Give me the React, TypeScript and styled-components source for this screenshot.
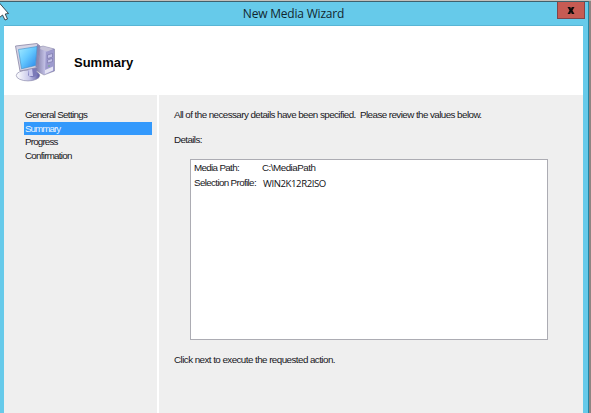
import React from "react";
import styled, { createGlobalStyle } from "styled-components";

const GlobalStyle = createGlobalStyle`
  * { box-sizing: border-box; }
  html, body { margin: 0; overflow: hidden; }
  body { background: #8f8583; font-family: "Liberation Sans", Arial, sans-serif; }
`;

const Screen = styled.div`
  position: relative;
  width: 591px;
  height: 413px;
  padding-right: 2px;
  border-top: 1px solid #c3bfba;
  overflow: hidden;
`;

const WindowFrame = styled.div`
  height: 412px;
  padding: 0 5px 0 4px;
  background: #66caea;
  border-top: 1px solid #40606c;
  border-right: 1px solid #2187a5;
  display: flex;
  flex-direction: column;
`;

const TitleBar = styled.header`
  height: 24px;
  flex: none;
  display: grid;
  grid-template-columns: 1fr auto 1fr;
  align-items: start;
  border-bottom: 1px solid #58b5d5;
`;

const Title = styled.h1`
  grid-column: 2;
  margin: 0;
  font: 400 12px/24px "Open Sans", sans-serif;
  letter-spacing: -0.2px;
  color: #12272f;
`;

const CloseButton = styled.button`
  justify-self: end;
  width: 28px;
  height: 17px;
  margin-right: -2px;
  padding: 0;
  display: grid;
  place-items: center;
  background: #c75b53;
  border: 1px solid #81444a;
  border-top: 0;
`;

const Banner = styled.div`
  height: 69px;
  flex: none;
  display: flex;
  background: #fff;
`;

const BannerIcon = styled.svg`
  width: 50px;
  height: 48px;
  margin: 12px 0 0 6px;
`;

const Heading = styled.h2`
  margin: 29px 0 0 14px;
  font-size: 13px;
  line-height: 16px;
  font-weight: 700;
  color: #050505;
`;

const Body = styled.div`
  flex: 1;
  display: flex;
  gap: 2px;
  background: #fff;
`;

const Sidebar = styled.nav`
  width: 153px;
  padding: 13px 5px 0 20px;
  background: #efefef;
`;

const Step = styled.div<{ $active?: boolean; $spacing: number }>`
  height: 13.7px;
  padding-left: 1px;
  font-size: 9.8px;
  line-height: 13.7px;
  letter-spacing: ${(p) => p.$spacing}px;
  white-space: nowrap;
  color: ${(p) => (p.$active ? "#e9f4ff" : "#17171c")};
  background: ${(p) => (p.$active ? "#3399fc" : "transparent")};
`;

const Content = styled.main`
  flex: 1;
  padding: 12px 35px 0 15px;
  background: #efefef;
`;

const Text = styled.p<{ $spacing: number; $gap?: number }>`
  margin: 0 0 ${(p) => p.$gap ?? 0}px;
  font-size: 9.8px;
  line-height: 15px;
  letter-spacing: ${(p) => p.$spacing}px;
  white-space: pre;
  color: #17171c;
`;

const Details = styled.section`
  width: 358px;
  height: 181px;
  margin: 12px 0 12px 16px;
  padding: 0 3px;
  background: #fff;
  border: 1px solid #acacb3;
`;

const DetailRow = styled.div`
  display: grid;
  grid-template-columns: 68px 1fr;
  height: 15px;
`;

const ProfileName = styled.span`
  padding-left: 1px;
  font: 400 9.6px/18px "Open Sans", sans-serif;
  letter-spacing: -0.42px;
  color: #101014;
`;

const Pointer = styled.svg`
  position: absolute;
  left: 0;
  top: 0;
  width: 10px;
  height: 21px;
`;

function ComputerIcon() {
  return (
    <BannerIcon viewBox="10 38 50 48">
      <defs>
        <linearGradient id="screen" x1="0" y1="0" x2="1" y2="1">
          <stop offset="0" stopColor="#a5ebff" />
          <stop offset=".45" stopColor="#67caff" />
          <stop offset="1" stopColor="#2684ea" />
        </linearGradient>
        <linearGradient id="tower">
          <stop offset="0" stopColor="#77749e" />
          <stop offset=".5" stopColor="#c1bfe4" />
          <stop offset="1" stopColor="#7774b2" />
        </linearGradient>
        <linearGradient id="base">
          <stop offset="0" stopColor="#fff" />
          <stop offset=".55" stopColor="#c8c8ea" />
          <stop offset="1" stopColor="#5958a2" />
        </linearGradient>
      </defs>
      <path d="M36 48 43 46 54.5 49V71L44 75 35 70Z" fill="url(#tower)" stroke="#85829f" strokeWidth=".5" />
      <path d="M37 48 43 46.5 54 49 47 51.5Z" fill="#c6c3d9" />
      <path d="M46 52 54 49.5V70.5L45 74Z" fill="#9d9ace" />
      <path d="M47.5 55 52.5 53.5V57L47.5 58.5ZM47.5 60 52.5 58.5V61.5L47.5 63Z" fill="#c4c2e8" stroke="#7370a5" strokeWidth=".6" />
      <path d="m45 70 8-3.5v4L45 74Z" fill="#e5e4f5" />
      <circle cx="49" cy="66" r=".7" fill="#65b26d" />
      <ellipse cx="28" cy="75.5" rx="11.7" ry="5.4" fill="url(#base)" stroke="#8e8dad" strokeWidth=".7" />
      <path d="m28 69 8-3 1 8c-1 4-7 4-9 1Z" fill="#7b7ab8" />
      <path d="m28 69 4-1 1 8h-4Z" fill="#c8c7eb" />
      <path d="M15.5 46 37 43.5 40 46 37.5 67.5 20 71Z" fill="#d5d4e5" stroke="#8985a6" strokeWidth=".8" />
      <path d="M37 44 40 46 37.5 67.5 35.5 67Z" fill="#8a86b2" />
      <path d="M18.5 49.5 37 46.5 35.5 65.5 21.5 68.8Z" fill="url(#screen)" stroke="#3f8bc4" strokeWidth=".6" />
    </BannerIcon>
  );
}

export default function App() {
  return (
    <>
      <GlobalStyle />
      <Screen>
        <WindowFrame>
          <TitleBar>
            <Title>New Media Wizard</Title>
            <CloseButton aria-label="Close">
              <svg width="8" height="7" viewBox="0 0 8 7">
                <path d="M.5 0h2.8L4 1.8 4.8 0h2.7L5.5 3.4 7.5 7H4.8L4 5 3.2 7H.5l2-3.6Z" fill="#100c0c" />
              </svg>
            </CloseButton>
          </TitleBar>
          <Banner>
            <ComputerIcon />
            <Heading>Summary</Heading>
          </Banner>
          <Body>
            <Sidebar>
              <Step $spacing={-0.67}>General Settings</Step>
              <Step $active $spacing={-0.95}>Summary</Step>
              <Step $spacing={-0.82}>Progress</Step>
              <Step $spacing={-0.74}>Confirmation</Step>
            </Sidebar>
            <Content>
              <Text $spacing={-0.56} $gap={10}>
                {"All of the necessary details have been specified.  Please review the values below."}
              </Text>
              <Text $spacing={-0.6}>Details:</Text>
              <Details>
                <DetailRow>
                  <Text $spacing={-0.66}>Media Path:</Text>
                  <Text $spacing={-0.5}>{"C:\\MediaPath"}</Text>
                </DetailRow>
                <DetailRow>
                  <Text $spacing={-0.64}>Selection Profile:</Text>
                  <ProfileName>WIN2K12R2ISO</ProfileName>
                </DetailRow>
              </Details>
              <Text $spacing={-0.55}>Click next to execute the requested action.</Text>
            </Content>
          </Body>
        </WindowFrame>
        <Pointer viewBox="0 0 10 21">
          <path d="M-1 1.5 8.5 12.5 5.2 13 7.5 18 5 19 2.5 14-1 17Z" fill="#fff" stroke="#303940" strokeWidth=".9" />
        </Pointer>
      </Screen>
    </>
  );
}
